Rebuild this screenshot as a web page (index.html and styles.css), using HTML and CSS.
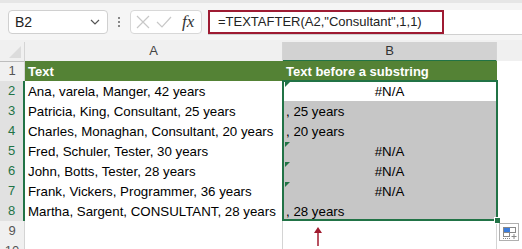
FILE: index.html
```html
<!DOCTYPE html>
<html lang="en">
<head>
    <meta charset="UTF-8">
    <title>TEXTAFTER</title>
    <link rel="stylesheet" href="styles.css">
</head>
<body>
    <div class="app">
        <div class="toolbar">
            <div class="namebox">
                <span>B2</span>
                <svg class="chevron" width="10" height="6" viewBox="0 0 10 6"><path d="M1 1 L5 5 L9 1" fill="none" stroke="#555" stroke-width="1.2"/></svg>
            </div>
            <div class="grip"><i></i><i></i><i></i></div>
            <div class="fxbox">
                <svg width="14" height="14" viewBox="0 0 14 14"><path d="M1 1 L13 13 M13 1 L1 13" stroke="#c8c8c8" stroke-width="1.2"/></svg>
                <svg width="16" height="12" viewBox="0 0 16 12"><path d="M1 6 L6 11 L15 1" fill="none" stroke="#c8c8c8" stroke-width="1.2"/></svg>
                <span class="fx">fx</span>
            </div>
            <div class="formula">
                <div class="formula-text">=TEXTAFTER(A2,"Consultant",1,1)</div>
            </div>
        </div>

        <div class="sheet">
            <div class="row head">
                <div class="corner"><span></span></div>
                <div class="colhead">A</div>
                <div class="colhead active">B</div>
                <div class="colhead blank"></div>
            </div>
            <div class="row title">
                <div class="rownum">1</div>
                <div class="cell">Text</div>
                <div class="cell">Text before a substring</div>
                <div class="cell blank"></div>
            </div>
            <div class="row">
                <div class="rownum sel">2</div>
                <div class="cell">Ana, varela, Manger, 42 years</div>
                <div class="cell center err">#N/A</div>
                <div class="cell blank"></div>
            </div>
            <div class="row">
                <div class="rownum sel">3</div>
                <div class="cell">Patricia, King, Consultant, 25 years</div>
                <div class="cell shade">, 25 years</div>
                <div class="cell blank"></div>
            </div>
            <div class="row">
                <div class="rownum sel">4</div>
                <div class="cell">Charles, Monaghan, Consultant, 20 years</div>
                <div class="cell shade">, 20 years</div>
                <div class="cell blank"></div>
            </div>
            <div class="row">
                <div class="rownum sel">5</div>
                <div class="cell">Fred, Schuler, Tester, 30 years</div>
                <div class="cell shade center err">#N/A</div>
                <div class="cell blank"></div>
            </div>
            <div class="row">
                <div class="rownum sel">6</div>
                <div class="cell">John, Botts, Tester, 28 years</div>
                <div class="cell shade center err">#N/A</div>
                <div class="cell blank"></div>
            </div>
            <div class="row">
                <div class="rownum sel">7</div>
                <div class="cell">Frank, Vickers, Programmer, 36 years</div>
                <div class="cell shade center err">#N/A</div>
                <div class="cell blank"></div>
            </div>
            <div class="row">
                <div class="rownum sel">8</div>
                <div class="cell">Martha, Sargent, CONSULTANT, 28 years</div>
                <div class="cell shade">, 28 years</div>
                <div class="cell blank"></div>
            </div>
            <div class="row">
                <div class="rownum">9</div>
                <div class="cell"></div>
                <div class="cell"></div>
                <div class="cell blank"></div>
            </div>
            <div class="row">
                <div class="rownum">10</div>
                <div class="cell"></div>
                <div class="cell"></div>
                <div class="cell blank"></div>
            </div>

            <!-- selection B2:B8 -->
            <div class="selection"><span class="handle"></span></div>

            <div class="paste-options">
                <svg width="17" height="15" viewBox="0 0 17 15">
                    <rect x="2" y="2" width="7" height="5" fill="#3b7ddd"/>
                    <rect x="2.5" y="2.5" width="12" height="5" fill="none" stroke="#888"/>
                    <rect x="2.5" y="7.5" width="6" height="4" fill="none" stroke="#888"/>
                    <path d="M2 13.5 H9" stroke="#888" stroke-dasharray="1 1"/>
                    <path d="M13 9 V14 M10.5 11.5 H15.5" stroke="#888"/>
                </svg>
            </div>

            <svg class="arrow" width="10" height="20" viewBox="0 0 10 20">
                <path d="M5 20 V4" stroke="#a01a2e" stroke-width="1.5"/>
                <path d="M1 7 L5 1 L9 7 Z" fill="#a01a2e"/>
            </svg>
        </div>
    </div>
</body>
</html>
```

FILE: styles.css
```css
* {
    margin: 0;
    padding: 0;
    box-sizing: border-box;
}

body {
    width: 522px;
    height: 249px;
    overflow: hidden;
    background: #ffffff;
    font-family: 'Liberation Sans', Arial, sans-serif;
}

.toolbar {
    height: 40px;
    background: #f5f5f5;
    border-top: 3px solid #e6e6e6;
    display: flex;
    align-items: flex-start;
    padding: 7px 0 0 8px;
}

.namebox {
    width: 100px;
    height: 24px;
    background: #fff;
    border: 1px solid #d0d0d0;
    border-radius: 4px;
    display: flex;
    align-items: center;
    justify-content: space-between;
    padding: 0 7px 0 6px;
    font-size: 14px;
    color: #222;
}

.grip {
    width: 22px;
    height: 24px;
    display: flex;
    flex-direction: column;
    align-items: center;
    justify-content: center;
    gap: 2px;
}

.grip i {
    width: 2px;
    height: 2px;
    background: #888;
}

.fxbox {
    width: 72px;
    height: 24px;
    background: #fff;
    border: 1px solid #d8d8d8;
    border-radius: 4px;
    display: flex;
    align-items: center;
    gap: 6px;
    padding-left: 5px;
}

.fx {
    font-family: 'Liberation Serif', serif;
    font-style: italic;
    font-size: 17px;
    color: #333;
    margin-left: 4px;
}

.formula {
    flex: 1;
    height: 25px;
    margin-left: 6px;
    background: #fff;
    border-bottom: 1px solid #d0d0d0;
}

.formula-text {
    width: 236px;
    height: 24px;
    border: 2px solid #9e1b32;
    padding-left: 8px;
    font-size: 13px;
    line-height: 20px;
    color: #222;
    white-space: nowrap;
}

.sheet {
    position: relative;
    background: #f0f0f0;
    padding-top: 2px;
}

.row {
    display: grid;
    grid-template-columns: 25px 258px 214px 25px;
    height: 20px;
    font-size: 13.3px;
}

.row.head {
    height: 19px;
}

.corner {
    background: #f0f0f0;
    border-right: 1px solid #d4d4d4;
    border-bottom: 1px solid #bdbdbd;
    position: relative;
}

.corner span {
    position: absolute;
    right: 3px;
    bottom: 3px;
    width: 0;
    height: 0;
    border-left: 12px solid transparent;
    border-bottom: 12px solid #dcdcdc;
}

.colhead {
    background: #f0f0f0;
    border-right: 1px solid #d4d4d4;
    border-bottom: 1px solid #bdbdbd;
    text-align: center;
    line-height: 18px;
    color: #444;
    font-size: 13px;
}

.colhead.active {
    background: #d2d2d2;
    border-bottom: 2px solid #217346;
    color: #333;
}

.colhead.blank {
    border-right: none;
}

.rownum {
    background: #f0f0f0;
    border-right: 1px solid #d4d4d4;
    border-bottom: 1px solid #d4d4d4;
    text-align: center;
    line-height: 20px;
    color: #555;
    font-size: 13px;
}

.rownum.sel {
    background: #e1e1e1;
    color: #217346;
    border-right: 2px solid #217346;
}

.cell {
    background: #fff;
    border-right: 1px solid #d4d4d4;
    border-bottom: 1px solid #d4d4d4;
    padding: 2px 0 0 3px;
    line-height: 17px;
    color: #000;
    white-space: nowrap;
    position: relative;
}

.cell.blank {
    border-right: none;
}

.title .cell {
    background: #548235;
    color: #fff;
    font-weight: bold;
    font-size: 13px;
    border-color: #548235;
}

.title .cell.blank {
    background: #fff;
    border-color: #d4d4d4;
}

.shade {
    background: #c6c6c6;
    border-bottom-color: #a6a6a6;
}

.center {
    text-align: center;
    padding-left: 0;
}

.err::before {
    content: "";
    position: absolute;
    left: 2px;
    top: 1px;
    border-top: 5px solid #217346;
    border-right: 5px solid transparent;
}

.selection {
    position: absolute;
    left: 282px;
    top: 40px;
    width: 216px;
    height: 141px;
    border: 2px solid #217346;
    pointer-events: none;
}

.handle {
    position: absolute;
    right: -5px;
    bottom: -5px;
    width: 7px;
    height: 7px;
    background: #217346;
    border: 1px solid #fff;
}

.paste-options {
    position: absolute;
    left: 499px;
    top: 183px;
    width: 20px;
    height: 18px;
    background: #fff;
    border: 1px solid #b0b0b0;
    display: flex;
    align-items: center;
    justify-content: center;
}

.arrow {
    position: absolute;
    left: 313px;
    top: 186px;
}
```
